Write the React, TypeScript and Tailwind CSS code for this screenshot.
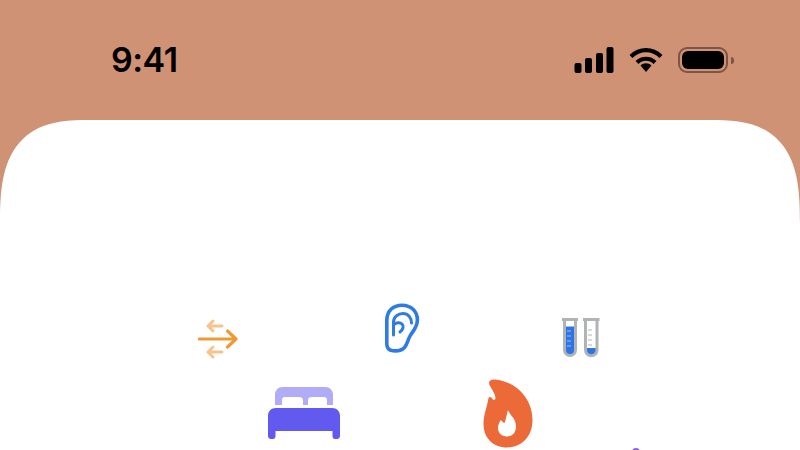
function SignalIcon() {
    return (
        <svg width="40" height="26" viewBox="0 0 40 26" fill="#000">
            <rect x="0.5" y="16" width="7" height="10" rx="2" />
            <rect x="11" y="11" width="7" height="15" rx="2" />
            <rect x="22" y="6" width="7" height="20" rx="2" />
            <rect x="32.5" y="0" width="7" height="26" rx="2" />
        </svg>
    )
}

function WifiIcon() {
    return (
        <svg width="34" height="26" viewBox="0 0 34 26" fill="none" stroke="#000" strokeWidth="4.2">
            <path d="M2 9.5C10.5 1 23.5 1 32 9.5" />
            <path d="M8 15.5C13 10.5 21 10.5 26 15.5" />
            <path d="M11.5 18.5C14.5 15.6 19.5 15.6 22.5 18.5L17 25Z" fill="#000" stroke="none" />
        </svg>
    )
}

function BatteryIcon() {
    return (
        <div className="flex items-center gap-[3px]">
            <div className="flex h-[26px] w-[50px] rounded-[9px] border-2 border-[#7d5546] p-[2px]">
                <div className="flex-1 rounded-[6px] bg-black" />
            </div>
            <div className="h-[7px] w-[3px] rounded-r-[3px] bg-[#7d5546]" />
        </div>
    )
}

function ArrowsIcon() {
    return (
        <svg width="40" height="42" viewBox="0 0 40 42" fill="none" strokeLinecap="round" strokeLinejoin="round">
            <path d="M10 8H24M15 3L10 8L15 13" stroke="#f6c48d" strokeWidth="3" />
            <path d="M10 34H24M15 29L10 34L15 39" stroke="#f6c48d" strokeWidth="3" />
            <path d="M1.5 21H38M29.5 13L38 21L29.5 29" stroke="#ec9b36" strokeWidth="3.2" />
        </svg>
    )
}

function EarIcon() {
    return (
        <svg width="36" height="50" viewBox="0 0 36 50" fill="none" stroke="#2f7be6" strokeLinecap="round" strokeLinejoin="round">
            <path
                d="M2.8 17.5C2.8 8 9 2.2 18 2.2C27 2.2 33.4 8 33.4 17C33.4 24.5 28.5 28.5 26 33C23.5 37.5 23.5 41 20.5 44.5C17.5 47.8 13 48.2 9 47.8C4.8 47.3 2.8 45 2.8 41Z"
                strokeWidth="3.6"
            />
            <path d="M9.5 32V19C9.5 14 14 10.5 19 10.5C24 10.5 27.5 14.5 27.5 20" strokeWidth="3" />
            <path d="M9.5 22C12 19.5 16 19 18 21C20 23 19.5 26 16 29" strokeWidth="3" />
        </svg>
    )
}

function TubesIcon() {
    return (
        <svg width="38" height="40" viewBox="0 0 38 40" fill="none">
            <path d="M2.5 8.5H13.5V27H2.5Z" fill="#2f74e4" />
            <path d="M2.5 26H13.5V31.5A5.5 5.5 0 0 1 2.5 31.5Z" fill="#2f74e4" />
            <path d="M23.5 30H35V32A5.7 5.7 0 0 1 23.5 32Z" fill="#2f74e4" />
            <path d="M2.5 2V32A5.5 5.5 0 0 0 13.5 32V2" stroke="#b0b4b5" strokeWidth="3" />
            <path d="M23.5 2V32A5.7 5.7 0 0 0 35 32V2" stroke="#b0b4b5" strokeWidth="3" />
            <path d="M0 1.5H16M21 1.5H37.5" stroke="#b0b4b5" strokeWidth="3" />
            <path d="M5 13H9M5 18H9M5 23H9M5 28H9" stroke="#9cc0f3" strokeWidth="1.2" />
            <path d="M26 12H30M26 17H30M26 22H30M26 27H30" stroke="#b0b4b5" strokeWidth="1.2" />
        </svg>
    )
}

function BedIcon() {
    return (
        <svg width="72" height="52" viewBox="0 0 72 52">
            <path
                d="M7 18V8C7 3.5 10 0 15 0H57C62 0 65 3.5 65 8V18H59V13C59 11 58 10 56 10H44C41.5 10 40 11 40 13V18H35V13C35 11 33.5 10 31 10H17C15 10 14 11 14 13V18Z"
                fill="#b1acf6"
            />
            <path
                d="M0 29C0 24.5 3 21 8 21H64C69 21 72 24.5 72 29V49C72 51 70.5 52 69 52H67C65.5 52 64.5 51 64.5 49V44H7.5V49C7.5 51 6.5 52 5 52H3C1.5 52 0 51 0 49Z"
                fill="#6259ee"
            />
        </svg>
    )
}

function FlameIcon() {
    return (
        <svg width="50" height="69" viewBox="0 0 50 69">
            <path
                d="M6.5 6C5 2 7.5 0 12 0.5C31 2 49.5 18 49.5 41C49.5 58 38 68.5 24 68.5C10 68.5 0.5 59 0.5 45C0.5 36 3.5 30 5.5 19C6.5 17 8.5 18 9.5 20C10.5 21.5 12 21 12.5 19.5C12.5 15 9 11 6.5 6Z"
                fill="#ec6a37"
            />
            <path
                d="M25 31C26.5 36 33 39 33 47.5C33 53.5 29.5 57.5 24 57.5C18.5 57.5 15 53.5 15 49C15 45.5 16.5 43 18 41C19 42.5 20 43.5 21.5 44C23 40.5 23.5 36 25 31Z"
                fill="#fff"
            />
        </svg>
    )
}

function App() {
    return (
        <div className="flex h-[450px] w-[800px] flex-col overflow-hidden bg-[#d09275] font-['Inter',sans-serif]">
            <div className="flex h-[120px] items-start justify-between pt-[47px] pr-[66px] pl-[111px]">
                <span className="text-[34px] leading-[26px] font-semibold tracking-[-0.5px] text-black">9:41</span>
                <div className="flex items-center gap-[15px]">
                    <SignalIcon />
                    <WifiIcon />
                    <BatteryIcon />
                </div>
            </div>

            <div className="relative flex-1 rounded-t-[90px_104px] [corner-shape:superellipse(1.5)] bg-white">
                <div className="absolute top-[198px] left-[198px]"><ArrowsIcon /></div>
                <div className="absolute top-[183px] left-[384px]"><EarIcon /></div>
                <div className="absolute top-[198px] left-[562px]"><TubesIcon /></div>
                <div className="absolute top-[267px] left-[268px]"><BedIcon /></div>
                <div className="absolute top-[259px] left-[483px]"><FlameIcon /></div>
                <div className="absolute top-[328px] left-[632px] h-[8px] w-[8px] rounded-full bg-[#8a5be8]" />
            </div>
        </div>
    )
}

export default App
